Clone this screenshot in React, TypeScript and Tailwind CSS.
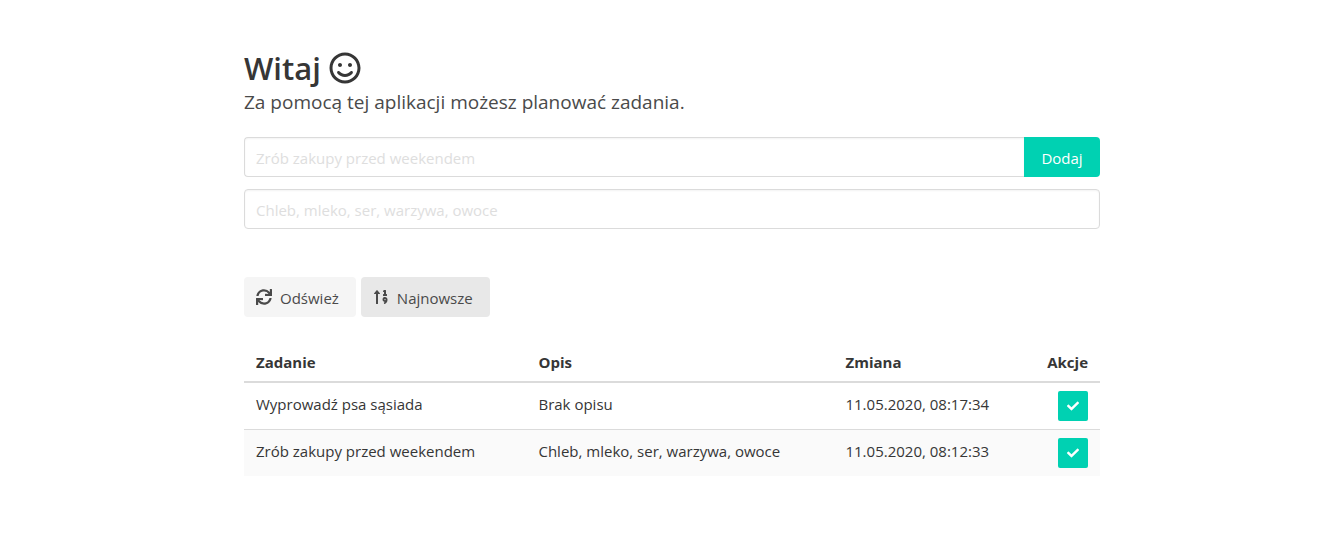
import { FaCheck, FaRegSmile, FaSortNumericUp, FaSync } from "react-icons/fa";

interface Task {
  name: string;
  description: string;
  changed: string;
}

const tasks: Task[] = [
  { name: "Wyprowadź psa sąsiada", description: "Brak opisu", changed: "11.05.2020, 08:17:34" },
  {
    name: "Zrób zakupy przed weekendem",
    description: "Chleb, mleko, ser, warzywa, owoce",
    changed: "11.05.2020, 08:12:33",
  },
];

const inputClass =
  "h-10 w-full min-w-0 border border-[#dbdbdb] bg-white px-[11px] pt-0.5 shadow-[inset_0_1px_2px_rgba(10,10,10,0.05)] placeholder:text-[#dedede] focus:outline-none focus:border-[#485fc7]";

function Header() {
  return (
    <header>
      <h1 className="flex items-center gap-2 text-[31px] leading-9 font-semibold text-[#363636]">
        Witaj
        <FaRegSmile className="size-8" aria-hidden="true" />
      </h1>
      <p className="mt-1 text-[19px] leading-6 text-[#4a4a4a]">
        Za pomocą tej aplikacji możesz planować zadania.
      </p>
    </header>
  );
}

function TaskForm() {
  return (
    <form className="mt-[23px] flex flex-col gap-3" onSubmit={(e) => e.preventDefault()}>
      <div className="flex">
        <input
          type="text"
          aria-label="Zadanie"
          placeholder="Zrób zakupy przed weekendem"
          className={`${inputClass} flex-1 rounded-l border-r-0`}
        />
        <button type="submit" className="h-10 w-19 rounded-r bg-[#00d1b2] pt-0.5 text-white">
          Dodaj
        </button>
      </div>
      <input
        type="text"
        aria-label="Opis"
        placeholder="Chleb, mleko, ser, warzywa, owoce"
        className={`${inputClass} rounded`}
      />
    </form>
  );
}

function Toolbar() {
  return (
    <div className="mt-12 flex gap-[5px]">
      <button type="button" className="flex h-10 items-center gap-2 rounded bg-[#f5f5f5] pr-[17px] pl-3 text-[#4a4a4a]">
        <FaSync className="size-4" aria-hidden="true" />
        <span className="pt-0.5">Odśwież</span>
      </button>
      <button type="button" className="flex h-10 items-center gap-2 rounded bg-[#e8e8e8] pr-[17px] pl-3 text-[#4a4a4a]">
        <FaSortNumericUp className="size-4" aria-hidden="true" />
        <span className="pt-0.5">Najnowsze</span>
      </button>
    </div>
  );
}

function TaskTable() {
  return (
    <table className="mt-[25px] w-full table-fixed border-collapse text-left text-[#363636]">
      <thead>
        <tr className="border-b-2 border-[#dbdbdb]">
          <th className="w-[33%] px-3 pt-2 pb-[7px] font-bold">Zadanie</th>
          <th className="w-[307px] px-3 pt-2 pb-[7px] font-bold">Opis</th>
          <th className="px-3 pt-2 pb-[7px] font-bold">Zmiana</th>
          <th className="w-20 px-3 pt-2 pb-[7px] text-right font-bold">Akcje</th>
        </tr>
      </thead>
      <tbody>
        {tasks.map((task) => (
          <tr key={task.name} className="border-b border-[#dbdbdb] align-top last:border-b-0 even:bg-[#fafafa]">
            <td className="px-3 pt-[9px]">{task.name}</td>
            <td className="px-3 pt-[9px]">{task.description}</td>
            <td className="px-3 pt-[9px]">{task.changed}</td>
            <td className="px-3 py-2">
              <button
                type="button"
                aria-label="Wykonane"
                className="ml-auto flex size-[30px] items-center justify-center rounded-xs bg-[#00d1b2] text-white"
              >
                <FaCheck className="size-3" aria-hidden="true" />
              </button>
            </td>
          </tr>
        ))}
      </tbody>
    </table>
  );
}

export default function App() {
  return (
    <main className="mx-auto max-w-[880px] px-3 pt-[50px] pb-12 font-['Open_Sans','Noto_Sans',sans-serif] text-[15px] leading-6">
      <Header />
      <TaskForm />
      <Toolbar />
      <TaskTable />
    </main>
  );
}
